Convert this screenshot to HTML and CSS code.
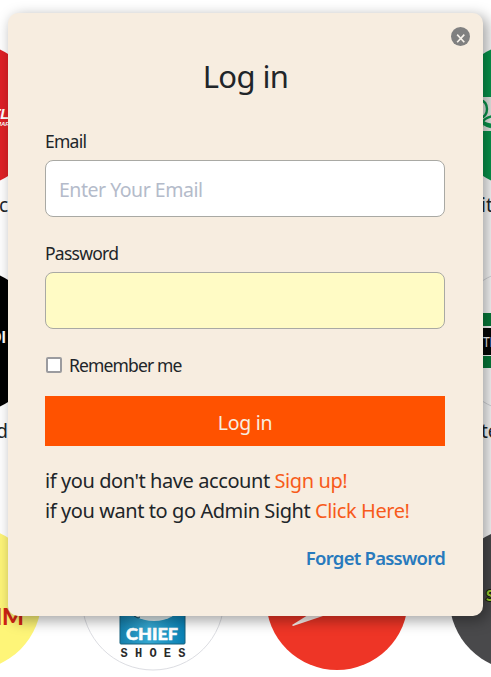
FILE: index.html
```html
<!DOCTYPE html>
<html lang="en">
<head>
<meta charset="utf-8">
<title>Log in</title>
<link rel="stylesheet" href="styles.css">
</head>
<body>
<div class="page">
<main class="brands">
  <article class="brand start"><svg class="logo" viewBox="0 0 142 142"><circle cx="71" cy="71" r="72.500" fill="#df2127"/><text x="93" y="75" class="slant" font-size="15">TL</text><text x="98" y="82" class="slant" font-size="6">MAR</text></svg><p>c</p></article>
  <article class="brand"></article>
  <article class="brand"></article>
  <article class="brand end"><svg class="logo" viewBox="0 0 142 142"><circle cx="71" cy="71" r="72" fill="#07984d"/><path fill="#e9eee9" d="M0 53h142v34H0z"/><g fill="none" stroke="#07984d" stroke-width="2.4"><ellipse cx="31" cy="65" rx="6" ry="8.500"/><path d="M43 72q-9 2-10 6 4 2 10 3M29 74q3 7 12 9M32 83v-5"/></g></svg><p>it</p></article>
  <article class="brand start"><svg class="logo" viewBox="0 0 142 142"><circle cx="71" cy="71" r="72.500"/><text x="92" y="73" class="block" font-size="16">DI</text></svg><p>d</p></article>
  <article class="brand"></article>
  <article class="brand"></article>
  <article class="brand end"><svg class="logo" viewBox="0 0 142 142"><circle cx="71" cy="71" r="71.500" fill="#fff" stroke="#d9dade"/><path fill="#077d3b" d="M20 43h100v13H20zm0 43h100v12H20z"/><path fill="#050706" d="M20 58h100v27H20z"/><text x="33" y="77" class="narrow" font-size="14" textLength="10" lengthAdjust="spacingAndGlyphs">TI</text></svg><p>te</p></article>
  <article class="brand"><svg class="logo" viewBox="0 0 142 142"><circle cx="71.500" cy="70.500" r="72" fill="#fef578"/><text x="126" y="97" text-anchor="end" class="red-word" font-size="23">IM</text></svg></article>
  <article class="brand"><svg class="logo" viewBox="0 0 142 142"><defs><linearGradient id="sky" x2="1"><stop stop-color="#147fac"/><stop offset=".45" stop-color="#35a7d1"/><stop offset="1" stop-color="#087fb3"/></linearGradient></defs><circle cx="71" cy="71" r="71" fill="#fff" stroke="#dcdde2"/><rect x="38" y="58" width="65" height="58" rx="1" fill="url(#sky)" stroke="#17617d"/><ellipse cx="72" cy="77" rx="26" ry="16" fill="#dce9eb"/><path d="m52 88 4 2 2-1" stroke="#16465a" fill="none"/><text x="44" y="112" class="chief" font-size="17" textLength="52" lengthAdjust="spacingAndGlyphs">CHIEF</text><text x="38.500" y="128.500" class="shoes" font-size="12" textLength="65">SHOES</text></svg></article>
  <article class="brand"><svg class="logo" viewBox="0 0 142 142"><circle cx="71" cy="71" r="71" fill="#ee3526"/><path d="M26 97 50 82l22 0-15 6-30 10Z" fill="#faf1ed"/></svg></article>
  <article class="brand"><svg class="logo" viewBox="0 0 142 142"><circle cx="71" cy="71" r="71.500" fill="#49494b"/><text x="36" y="73" class="lime" font-size="15">S</text></svg></article>
</main>
</div>
<form class="dialog">
  <button type="button" class="close" aria-label="Close"><svg viewBox="0 0 20 20"><circle cx="10" cy="10" r="10"/><path d="m6.500 8 7.500 8m0-8-7.500 8"/></svg></button>
  <h1>Log in</h1>
  <label class="caption" for="email">Email</label>
  <input class="field" id="email" type="text" placeholder="Enter Your Email">
  <label class="caption" for="password">Password</label>
  <input class="field filled" id="password" type="password">
  <label class="remember"><input type="checkbox"><span>Remember me</span></label>
  <button type="button" class="submit">Log in</button>
  <p class="note">if you don't have account <a>Sign up!</a></p>
  <p class="note">if you want to go Admin Sight <a>Click Here!</a></p>
  <a class="forgot">Forget Password</a>
</form>
</body>
</html>
```
FILE: styles.css
```css
* { box-sizing: border-box; }
body {
  margin: 0;
  background: #fff;
  color: #212529;
  font-family: "Noto Sans", "Open Sans", sans-serif;
}
.page { height: 677px; overflow: hidden; }
h1, p { margin: 0; font-weight: 400; }
.brands {
  display: grid;
  grid-template-columns: repeat(4, 184px);
  grid-template-rows: 226px 258px 149px;
  margin-left: -123px;
  padding-top: 44px;
}
.brand { display: flex; flex-direction: column; align-items: center; }
.logo { display: block; width: 142px; height: 142px; flex: none; overflow: visible; }
.brand p { align-self: stretch; margin-top: 5px; font-size: 19px; line-height: 28px; }
.start p { text-align: right; padding-right: 53px; }
.end p { padding-left: 52px; }
.slant { font-family: "Liberation Sans", sans-serif; font-style: italic; font-weight: 700; fill: #fff; }
.block { font-family: "Liberation Sans", sans-serif; font-weight: 700; fill: #fff; }
.narrow { font-family: "Liberation Sans", sans-serif; fill: #fff; }
.red-word { font-family: Lato, sans-serif; font-weight: 900; fill: #d02313; }
.chief { font-family: Lato, sans-serif; font-weight: 900; fill: #fff; stroke: #fff; stroke-width: .5; }
.shoes { font-family: "Liberation Mono", monospace; font-weight: 700; fill: #292929; }
.lime { font-family: Lato, sans-serif; font-weight: 900; fill: #a2cf31; stroke: #181c10; stroke-width: 2; paint-order: stroke; }

.dialog {
  position: absolute;
  top: 13px;
  left: 8px;
  width: 475px;
  height: 603px;
  padding: 41px 38px 0 37px;
  display: flex;
  flex-direction: column;
  background: #f7ede0;
  border-radius: 10px;
  box-shadow: 4px 4px 14px 1px rgba(0, 0, 0, .35);
}
.close { position: absolute; top: 14px; right: 13px; width: 19px; height: 19px; padding: 0; border: 0; background: none; }
.close svg { display: block; width: 19px; height: 19px; }
.close circle { fill: #808080; }
.close path { fill: none; stroke: #f7f2eb; stroke-width: 1.7; }
h1 { height: 44px; margin-bottom: 14px; padding-left: 1px; font-size: 31px; line-height: 44px; text-align: center; letter-spacing: -.6px; }
.caption { height: 24px; margin-top: 17px; font-size: 17.500px; line-height: 24px; letter-spacing: -.75px; }
.field { width: 400px; height: 57px; margin: 7px 0; padding: 2px 13px 0; border: 1px solid #a9a9a4; border-radius: 8px; background: #fff; font: 19.500px "Noto Sans", sans-serif; letter-spacing: -.48px; }
.field::placeholder { color: #b4bbca; opacity: 1; }
.filled { background: #fffbc5; }
.remember { display: flex; align-items: center; height: 28px; margin-top: 15px; font-size: 17.500px; letter-spacing: -.85px; }
.remember input { appearance: none; width: 16px; height: 16px; margin: 0 7px 0 1px; border: 2px solid #9b9b9f; border-radius: 2px; background: #fff; }
.submit { height: 50px; margin: 17px 0 20px; padding: 3px 0 0; border: 0; background: #ff5200; color: #f7ede0; font: 19.500px "Noto Sans", sans-serif; letter-spacing: -.3px; }
.note { height: 30px; font-size: 20px; line-height: 30px; white-space: nowrap; letter-spacing: -.42px; }
.note a { color: #f75b1b; }
.forgot { align-self: flex-end; margin-top: 18px; font-size: 18.500px; line-height: 28px; font-weight: 600; color: #287abd; letter-spacing: -.75px; white-space: nowrap; }
```
